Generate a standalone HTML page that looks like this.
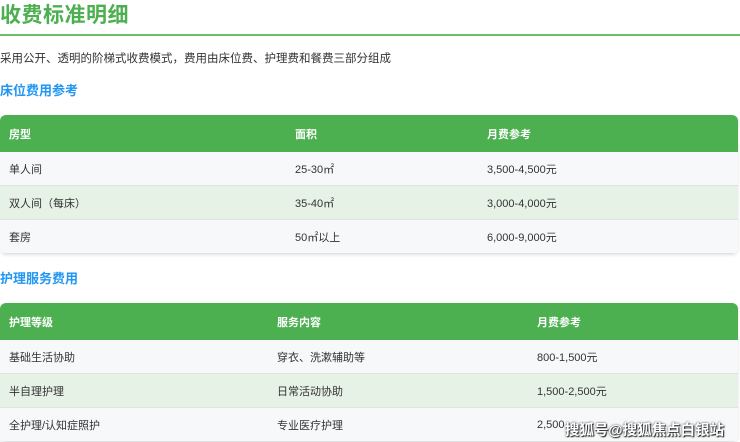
<!DOCTYPE html>
<html><head><meta charset="utf-8"><style>
*{margin:0;padding:0;box-sizing:border-box}
body{width:740px;height:442px;overflow:hidden;background:#fff;font-family:"Liberation Sans","Noto Sans CJK SC",sans-serif;color:#333;position:relative}
.abs{position:absolute;white-space:nowrap}
h1{position:absolute;left:0;top:-1px;font-size:21px;color:#4caf50;font-weight:bold;letter-spacing:0.5px}
.line{position:absolute;left:0;top:34px;width:740px;height:2px;background:#6dbb6f}
.p{left:0;top:50px;font-size:11.5px;color:#333}
.h3{font-size:13px;font-weight:bold;color:#2196f3;left:0}
.tbl{position:absolute;left:0;width:738px;border-radius:6px;overflow:hidden;box-shadow:0 1px 3px rgba(0,0,0,0.12)}
.row{position:relative;height:34px;border-bottom:1px solid #e0e3e0;font-size:11px;background:#f7f8fa}
.row.g{background:#e7f2e7}
.row.h{height:37px;background:#4caf50;color:#fff;font-weight:bold;border:none}
.row span{position:absolute;top:50%;transform:translateY(-50%)}
.wm{right:16px;top:419px;font-size:14.5px;color:#fff;font-weight:bold;text-shadow:0 0 2px #333,1px 1px 1px #222}
</style></head><body>
<h1>收费标准明细</h1>
<div class="line"></div>
<div class="abs p">采用公开、透明的阶梯式收费模式，费用由床位费、护理费和餐费三部分组成</div>
<div class="abs h3" style="top:80px">床位费用参考</div>
<div class="tbl" style="top:115px">
<div class="row h"><span style="left:9px">房型</span><span style="left:295px">面积</span><span style="left:487px">月费参考</span></div>
<div class="row"><span style="left:9px">单人间</span><span style="left:295px">25-30㎡</span><span style="left:487px">3,500-4,500元</span></div>
<div class="row g"><span style="left:9px">双人间（每床）</span><span style="left:295px">35-40㎡</span><span style="left:487px">3,000-4,000元</span></div>
<div class="row"><span style="left:9px">套房</span><span style="left:295px">50㎡以上</span><span style="left:487px">6,000-9,000元</span></div>
</div>
<div class="abs h3" style="top:268px">护理服务费用</div>
<div class="tbl" style="top:303px">
<div class="row h"><span style="left:9px">护理等级</span><span style="left:277px">服务内容</span><span style="left:537px">月费参考</span></div>
<div class="row"><span style="left:9px">基础生活协助</span><span style="left:277px">穿衣、洗漱辅助等</span><span style="left:537px">800-1,500元</span></div>
<div class="row g"><span style="left:9px">半自理护理</span><span style="left:277px">日常活动协助</span><span style="left:537px">1,500-2,500元</span></div>
<div class="row"><span style="left:9px">全护理/认知症照护</span><span style="left:277px">专业医疗护理</span><span style="left:537px">2,500</span></div>
</div>
<div class="abs wm">搜狐号@搜狐焦点白银站</div>
</body></html>
